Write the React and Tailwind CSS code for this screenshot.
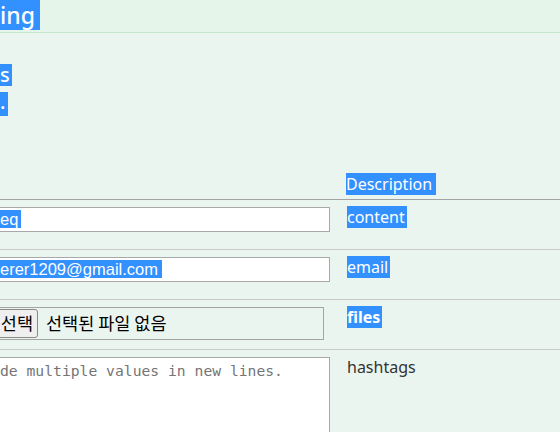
import React from "react";

const sel = "bg-[#3390ff] text-white";

const Row = ({ children, desc, descSelected, bold }) => (
  <div className="flex h-[50px] border-b border-[#c8cbc9]">
    <div className="w-[338px] shrink-0 pt-[7px] pr-[8px]">{children}</div>
    <div className="pl-[9px] pt-[6px] text-[16px] leading-[22px]">
      <span className={`${descSelected ? sel : "text-[#333]"} ${bold ? "font-bold" : ""} pr-[2px]`}>
        {desc}
      </span>
    </div>
  </div>
);

const FakeInput = ({ children }) => (
  <div className="-ml-[4px] h-[25px] border border-[#a9a9a9] bg-white pl-[3px] font-['Liberation_Sans',Arial,sans-serif] text-[16.5px] leading-[23px] text-black">
    {children}
  </div>
);

export default function App() {
  return (
    <div className="h-[432px] w-[560px] overflow-hidden bg-[#ebf5ef] font-['Noto_Sans',sans-serif]">
      <header className="h-[33px] border-b border-[#c3e6cc] bg-[#e5f5ea]">
        <span className={`${sel} inline-block h-[30px] pr-[5px] text-[23px] font-medium leading-[30px]`}>
          ing
        </span>
      </header>

      <div className="pt-[28px] text-[20px] font-medium leading-[27px]">
        <p>
          <span className={`${sel} inline-block h-[22px] pr-[2px] leading-[21px]`}>s</span>
        </p>
        <p>
          <span className={`${sel} inline-block h-[24px] pr-[3px] leading-[20px]`}>.</span>
        </p>
      </div>

      <div className="mt-[59px] flex h-[25px] border-b border-[#9fa3a1]">
        <div className="w-[338px] shrink-0" />
        <div className="pl-[8px] text-[16px] leading-[18px]">
          <span className={`${sel} pr-[4px]`}>Description</span>
        </div>
      </div>

      <Row desc="content" descSelected>
        <FakeInput>
          <span className={`${sel} pr-[3px]`}>eq</span>
        </FakeInput>
      </Row>

      <Row desc="email" descSelected>
        <FakeInput>
          <span className={`${sel} pr-[4px]`}>erer1209@gmail.com</span>
        </FakeInput>
      </Row>

      <Row desc="files" descSelected bold>
        <div className="-ml-[4px] mr-[6px] flex h-[33px] items-center gap-[8px] border border-[#a5a5a5] font-['Noto_Sans_CJK_KR',sans-serif] text-[17.5px] text-black">
          <div className="-ml-[20px] flex h-[29px] w-[61px] items-center justify-end rounded-[3px] border border-[#8a8a8a] bg-[#efefef] pr-[4px]">
            선택
          </div>
          <span>선택된 파일 없음</span>
        </div>
      </Row>

      <div className="flex">
        <div className="w-[338px] shrink-0 pt-[7px] pr-[8px]">
          <div className="-ml-[4px] h-[100px] border border-[#a9a9a9] bg-white pl-[3px] pt-[4px] font-['DejaVu_Sans_Mono',monospace] text-[14.7px] leading-[18px] text-[#757575]">
            de multiple values in new lines.
          </div>
        </div>
        <div className="pl-[9px] pt-[6px] text-[16px] leading-[22px] text-[#333]">hashtags</div>
      </div>
    </div>
  );
}
